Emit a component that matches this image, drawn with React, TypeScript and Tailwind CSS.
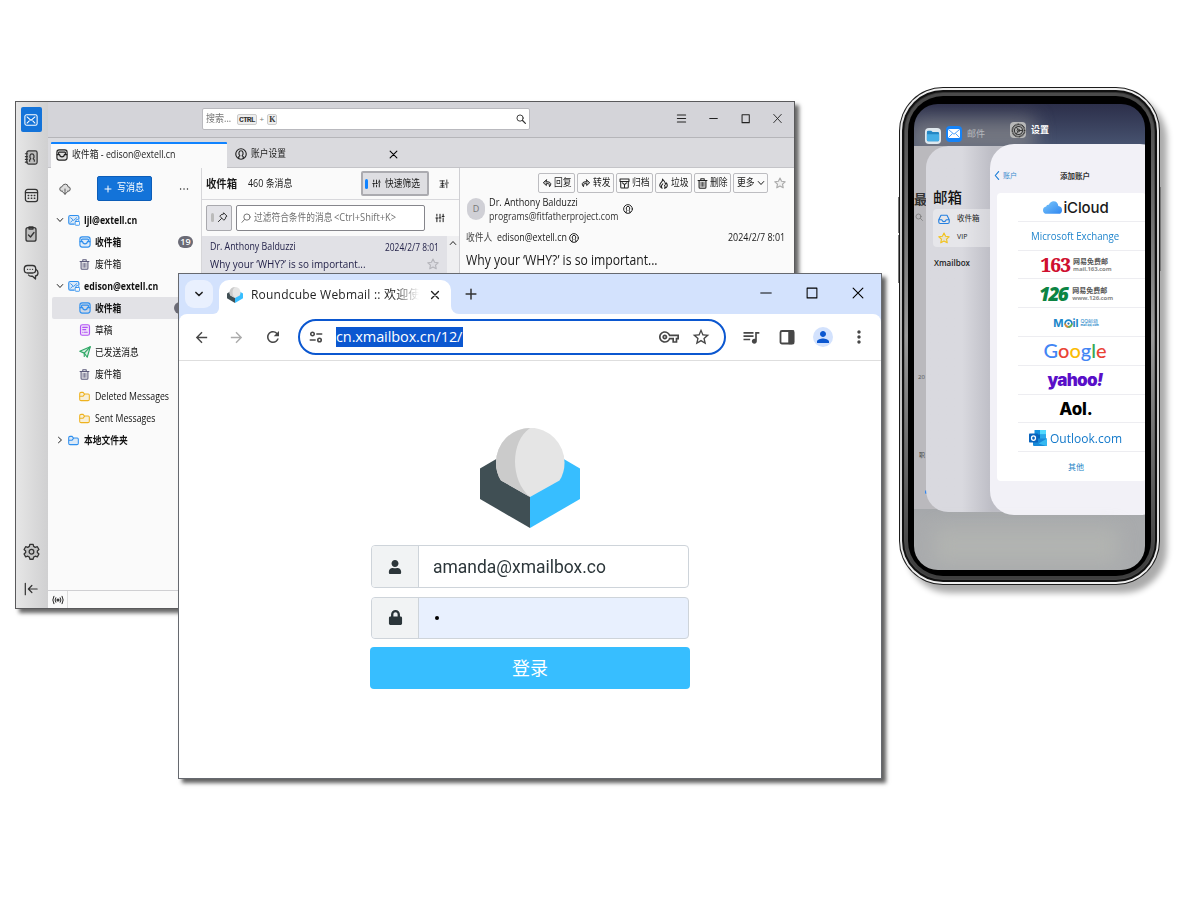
import type { ReactNode } from "react";
import {
  MdArrowBack,
  MdArrowForward,
  MdMoreVert,
  MdOutlineVpnKey,
  MdPerson,
  MdQueueMusic,
  MdRefresh,
  MdStarBorder,
} from "react-icons/md";
import { FaLock, FaUser } from "react-icons/fa";

const UI = "font-['Open_Sans','Noto_Sans_CJK_SC',sans-serif]";

/* Narrow label: the class gives the room it takes in the row and its horizontal scale. */
function Label({ className, children }: { className: string; children: ReactNode }) {
  return <span className={`block shrink-0 origin-left whitespace-nowrap ${className}`}>{children}</span>;
}

type IconProps = { className?: string; children: ReactNode; box?: number };

function Icon({ className = "", children, box = 16 }: IconProps) {
  return (
    <svg
      viewBox={`0 0 ${box} ${box}`}
      fill="none"
      stroke="currentColor"
      strokeWidth="1.5"
      strokeLinecap="round"
      strokeLinejoin="round"
      className={`shrink-0 ${className}`}
    >
      {children}
    </svg>
  );
}

const InboxIcon = ({ className = "" }: { className?: string }) => (
  <Icon className={className}>
    <rect x="1.2" y="1.2" width="13.6" height="13.6" rx="3" fill="currentColor" fillOpacity="0.12" />
    <path d="M4 4.200h8M1.500 7.500h3.300c.4 4 6 4 6.400 0h3.300M3.500 4.500v3M12.500 4.500v3" />
  </Icon>
);
const TrashIcon = ({ className = "" }: { className?: string }) => (
  <Icon className={className}>
    <path d="M1.500 3.700h13M5.500 3.500V1.200h5v2.300" />
    <path d="M3 4v9.500Q3 15 4.500 15h7q1.500 0 1.500-1.500V4" fill="currentColor" fillOpacity="0.15" />
    <path d="M6 6.500v5.500M8 6.500v5.500M10 6.500v5.500" strokeWidth="1" />
  </Icon>
);
const DraftIcon = ({ className = "" }: { className?: string }) => (
  <Icon className={className}>
    <rect x="2" y="1" width="12" height="14" rx="2.500" fill="currentColor" fillOpacity="0.15" />
    <path d="M5 4.500h6M5 7.500h4M7 11h4M5 11h.1" />
  </Icon>
);
const SentIcon = ({ className = "" }: { className?: string }) => (
  <Icon className={className}>
    <path d="M1 7 15 1l-4 14-4-5.500z" fill="currentColor" fillOpacity="0.15" />
    <path d="M15 1 7 9.500V14" />
  </Icon>
);
const FolderIcon = ({ className = "" }: { className?: string }) => (
  <Icon className={className}>
    <path d="M1 4Q1 2 3 2h3l2 2.500h5.500Q15 4.500 15 6v6q0 2-2 2H3q-2 0-2-2z" fill="currentColor" fillOpacity="0.15" />
    <path d="M1.500 7.500H6L8 5" />
  </Icon>
);
const AccountIcon = ({ className = "" }: { className?: string }) => (
  <Icon className={className}>
    <path d="M8 13.500H3q-2 0-2-2V4q0-2 2-2h9.500q2 0 2 2v2.500" fill="currentColor" fillOpacity="0.15" />
    <path d="m3.500 5 4 3.500 4-3.500M3.500 11 6 8.500" strokeWidth="1.200" />
    <rect x="9.500" y="10" width="6" height="5" rx="1" strokeWidth="1.200" />
    <path d="M10.700 10V8.500q0-1.200 1.800-1.200t1.800 1.200V10" strokeWidth="1.200" />
  </Icon>
);
const ContactIcon = ({ className = "" }: { className?: string }) => (
  <Icon className={className}>
    <circle cx="8" cy="8" r="7" />
    <path d="M5 14v-2.500l1.500-1C4.300 8 5 3.700 8 3.700s3.700 4.300 1.500 6.800l1.500 1V14" />
  </Icon>
);
const SlidersIcon = ({ className = "" }: { className?: string }) => (
  <Icon className={className}>
    <path d="M3 2v3M3 8v6M8 2v6M8 11v3M13 2v3M13 8v6M1.500 8h3M6.500 8h3M11.500 5.500h3" strokeWidth="1.600" />
  </Icon>
);
const StarIcon = ({ className = "" }: { className?: string }) => (
  <Icon className={className}>
    <path d="m8 1.300 2.100 4.400 4.800.6-3.500 3.300.9 4.800L8 12.100l-4.300 2.300.9-4.800L1.100 6.300l4.800-.6z" fill="currentColor" fillOpacity="0.12" />
  </Icon>
);
const DownIcon = ({ className = "" }: { className?: string }) => (
  <Icon className={className}>
    <path d="m2.500 5 5.500 6 5.500-6" strokeWidth="2" />
  </Icon>
);

/* ---------- Mail client window ---------- */

function SpacesBar() {
  return (
    <div className="flex w-[32px] shrink-0 flex-col items-center bg-linear-to-r from-[#e6e6e6] to-[#d0d0d1] pt-[5px] pr-[2px] text-[#333]">
      <div className="flex h-[25px] w-[21px] items-center justify-center rounded-[2px] bg-[#1373d9] text-white">
        <Icon className="size-[14px]">
          <g strokeWidth="1.200">
            <rect x="1" y="2" width="14" height="12" rx="2" />
            <path d="m3.500 4.500 4.500 4 4.500-4M3.500 11.500 6 9M12.500 11.500 10 9" />
          </g>
        </Icon>
      </div>
      <Icon className="mt-[18px] size-[15px]">
        <g strokeWidth="1.300">
          <rect x="3" y="1" width="11" height="14" rx="2" fill="#bdbdbd" />
          <path d="M1.500 4h2M1.500 7h2M1.500 10h2M1.500 13h2M6 12v-1.500l1.200-1C5.500 7 6.300 4.200 8.500 4.200s3 2.800 1.300 5.300l1.200 1V12" />
        </g>
      </Icon>
      <Icon className="mt-[23px] size-[15px]">
        <rect x="1.500" y="1.500" width="13" height="13" rx="2.500" strokeWidth="1.300" />
        <path d="M1.500 5h13" strokeWidth="1.300" />
        <path d="M4.500 8h.5M7.800 8h.5M11 8h.5M4.500 11h.5M7.800 11h.5M11 11h.5" />
      </Icon>
      <Icon className="mt-[23px] size-[16px]">
        <g strokeWidth="1.300">
          <rect x="3" y="1.700" width="10" height="13.500" rx="2" fill="#bdbdbd" />
          <path d="M6 1h4v2H6zM5.500 9l2 2L11 6.500" />
        </g>
      </Icon>
      <Icon className="mt-[22px] size-[16px]">
        <g strokeWidth="1.300">
          <path d="M4.500 1.500h5q3.200 0 3.200 3.200v1.100q0 3.200-3.200 3.200H4.500Q1.300 9 1.300 5.800V4.700q0-3.200 3.200-3.200zM4.500 5.300h.1M7 5.300h.1M9.500 5.300h.1" />
          <path d="M13 5.500q2 1 2 3.500 0 2.500-2.500 3v3l-3-2.800Q6.500 12.500 5.500 11" />
        </g>
      </Icon>
      <Icon className="mt-auto size-[17px]">
        <g strokeWidth="1.200">
          <path d="m6.500 1.200h3l.5 2 1.500.9 2-.6 1.500 2.600L13.500 7.500v1.500l1.500 1.400-1.500 2.600-2-.6-1.500.9-.5 2h-3l-.5-2-1.500-.9-2 .6L1 10.400 2.500 9V7.500L1 6.100l1.500-2.600 2 .6L6 3.200z" fill="#c6c6c6" />
          <circle cx="8" cy="8.200" r="2.200" />
        </g>
      </Icon>
      <Icon className="mt-[22px] mb-[12px] size-[14px]">
        <path d="M1.500 1.500v13M15 8H5M9 4 5 8l4 4" strokeWidth="1.400" />
      </Icon>
    </div>
  );
}

function TitleBar() {
  return (
    <div className="flex h-[36px] shrink-0 border-b border-[#b5b5b9] bg-[#d4d4d9]">
      <div className="mt-[6px] ml-[154px] flex h-[22px] w-[328px] items-center rounded-[2px] border border-[#b9b9be] bg-white pl-[3px] text-[#777]">
        <Label className="w-[25px] scale-x-[0.860] text-[10.500px]">搜索...</Label>
        <span className="ml-[6px] rounded-[2px] border border-[#ccc] bg-[#eee] px-[1px] font-['Liberation_Mono',monospace] text-[8px] leading-[9px] font-bold tracking-[-0.900px] text-[#333]">CTRL</span>
        <span className="mx-[3px] text-[8px]">+</span>
        <span className="rounded-[2px] border border-[#ccc] bg-[#eee] px-[1px] font-['Liberation_Serif',serif] text-[8px] leading-[9px] font-bold text-[#333]">K</span>
        <Icon className="mr-[3px] ml-auto size-[10px] text-[#333]">
          <circle cx="6.500" cy="6.500" r="5" />
          <path d="m10.500 10.500 4.500 4.500" strokeWidth="2" />
        </Icon>
      </div>
      <div className="mr-[11px] ml-auto flex h-[33px] items-center gap-[21px] text-[#222]">
        <Icon className="size-[11px]"><path d="M2 3h12M2 8h12M2 13h12" /></Icon>
        <Icon className="size-[11px]"><path d="M2.500 8h11" /></Icon>
        <Icon className="size-[11px]"><path d="M3 2.500h10.500v11.500H3z" /></Icon>
        <Icon className="size-[11px]"><path d="m2.500 2 11 12m0-12-11 12" strokeWidth="1.300" /></Icon>
      </div>
    </div>
  );
}

function TabBar() {
  return (
    <div className="flex h-[30px] shrink-0 items-end border-b border-[#c4c4c8] bg-[#dadade] text-[10.500px] text-[#222]">
      <div className="-mb-px ml-[3px] flex h-[26px] w-[176px] items-center rounded-t-[1px] border-t-2 border-[#1083ff] bg-[#fafafa] pb-[2px] pl-[5px]">
        <InboxIcon className="size-[12px]" />
        <Label className="ml-[4px] w-[104px] scale-x-[0.840]">收件箱 - edison@extell.cn</Label>
      </div>
      <div className="flex h-[26px] items-center pl-[8px]">
        <ContactIcon className="size-[12px]" />
        <Label className="ml-[4px] w-[35px] scale-x-[0.830]">账户设置</Label>
        <Icon className="ml-[103px] size-[9px] text-black"><path d="m2 2 12 12M14 2 2 14" strokeWidth="1.900" /></Icon>
      </div>
    </div>
  );
}

type Folder = {
  label: string;
  icon: ReactNode;
  top?: boolean;
  open?: boolean;
  bold?: boolean;
  selected?: boolean;
  badge?: string;
};

const folders: Folder[] = [
  { label: "ljl@extell.cn", bold: true, icon: <AccountIcon className="size-[12px] text-[#2f8fee]" />, top: true, open: true },
  { label: "收件箱", bold: true, icon: <InboxIcon className="size-[12px] text-[#2f8fee]" />, badge: "19" },
  { label: "废件箱", icon: <TrashIcon className="size-[11px] text-[#5c5b7b]" /> },
  { label: "edison@extell.cn", bold: true, icon: <AccountIcon className="size-[12px] text-[#2f8fee]" />, top: true, open: true },
  { label: "收件箱", bold: true, icon: <InboxIcon className="size-[12px] text-[#2f8fee]" />, selected: true, badge: "3" },
  { label: "草稿", icon: <DraftIcon className="size-[12px] text-[#b254f5]" /> },
  { label: "已发送消息", icon: <SentIcon className="size-[12px] text-[#2fa866]" /> },
  { label: "废件箱", icon: <TrashIcon className="size-[11px] text-[#5c5b7b]" /> },
  { label: "Deleted Messages", icon: <FolderIcon className="size-[11px] text-[#eeb21f]" /> },
  { label: "Sent Messages", icon: <FolderIcon className="size-[11px] text-[#eeb21f]" /> },
  { label: "本地文件夹", bold: true, icon: <FolderIcon className="size-[11px] text-[#2f8fee]" />, top: true },
];

function FolderRow({ f }: { f: Folder }) {
  const pad = f.top ? "pl-[4px]" : "pl-[27px]";
  return (
    <li className={`flex h-[22px] items-center rounded-[2px] ${pad} ${f.selected ? "bg-[#e2e2e6]" : ""}`}>
      {f.top && <DownIcon className={`mr-[4px] size-[8px] text-[#222] ${f.open ? "" : "-rotate-90"}`} />}
      <span className="flex w-[11px] justify-center">{f.icon}</span>
      <Label className={`ml-[5px] w-[75px] scale-x-[0.835] pt-px text-[10.500px] text-[#111] ${f.bold ? "font-bold" : ""}`}>{f.label}</Label>
      {f.badge && (
        <span className={`ml-auto flex h-[12px] items-center justify-center rounded-full bg-[#6b6b76] text-[9px] font-semibold text-white ${f.selected ? "mr-[9px] w-[18px]" : "mr-[8px] w-[15px]"}`}>
          {f.badge}
        </span>
      )}
    </li>
  );
}

function FolderPane() {
  return (
    <div className="flex w-[154px] shrink-0 flex-col border-r border-[#d6d6d9]">
      <div className="flex h-[41px] items-center pl-[11px]">
        <Icon className="size-[12px] text-[#555]">
          <path d="M5 11H4Q1 11 1 8t3-3Q5 1.500 8.500 1.500T12 5q3 0 3 3t-3 3h-1M8 8v7M5 12l3 3 3-3" fill="#ddd" strokeWidth="1.300" />
        </Icon>
        <div className="ml-[26px] flex h-[25px] w-[55px] items-center rounded-[2px] border border-[#0c5db8] bg-[#1373d9] pl-[6px] text-white">
          <Icon className="size-[8px]"><path d="M8 2v12M2 8h12" strokeWidth="2" /></Icon>
          <Label className="ml-[5px] w-[27px] scale-x-[0.860] pb-px text-[10.500px]">写消息</Label>
        </div>
        <Icon className="ml-[27px] size-[10px] text-[#222]"><path d="M2.500 8h.1M8 8h.1M13.500 8h.1" strokeWidth="2.200" /></Icon>
      </div>
      <ul className="ml-[4px]">
        {folders.map((f, i) => (
          <FolderRow key={i} f={f} />
        ))}
      </ul>
    </div>
  );
}

function MessageList() {
  return (
    <div className="flex w-[258px] shrink-0 flex-col border-r border-[#cfcfd3] text-[#1a1a1a]">
      <div className="flex h-[32px] items-center border-b border-[#d8d8dc] pl-[4px]">
        <Label className="w-[31px] scale-x-[0.900] text-[11.500px] font-bold">收件箱</Label>
        <Label className="ml-[11px] w-[44px] scale-x-[0.850] text-[10.500px]">460 条消息</Label>
        <div className="ml-auto flex h-[25px] w-[68px] items-center rounded-[2px] border-2 border-[#ababb0] bg-[#dedee2] pl-[2px]">
          <span className="h-[10px] w-[3px] rounded-full bg-[#1083ff]" />
          <SlidersIcon className="ml-[4px] size-[9px]" />
          <Label className="ml-[4px] w-[36px] scale-x-[0.830] text-[10.500px]">快速筛选</Label>
        </div>
        <Icon className="mr-[10px] ml-[10px] size-[10px]">
          <path d="M1.500 3h7M1.500 13h7M3 7h5M3 10h5M5.500 3v10M12.500 1.500v3M12.500 8v6M11 6.300h4M10 8h1" strokeWidth="1.300" />
        </Icon>
      </div>
      <div className="flex h-[36px] items-center pb-px pl-[4px]">
        <div className="flex h-[26px] w-[26px] items-center justify-center gap-[3px] rounded-[2px] border border-[#a9a9ae] bg-[#e3e3e8]">
          <span className="h-[9px] w-[3px] rounded-full bg-[#bbb]" />
          <Icon className="size-[11px]">
            <path d="M10 1.500 14.500 6l-1.500.8-1 3.200-2 2-6-6 2-2 3.200-1zM6.500 9.500 2 14" strokeWidth="1.300" />
          </Icon>
        </div>
        <div className="ml-[4px] flex h-[26px] w-[189px] items-center rounded-[2px] border border-[#85858b] bg-white pl-[4px] whitespace-nowrap text-[#707070]">
          <Icon className="size-[10px]">
            <circle cx="9.500" cy="6.500" r="5" />
            <path d="M5.500 10.500 1.500 15" />
          </Icon>
          <Label className="ml-[3px] w-[80px] scale-x-[0.830] text-[10.500px]">过滤符合条件的消息</Label>
          <Label className="w-[64px] scale-x-[0.890] text-[10.500px]">&lt;Ctrl+Shift+K&gt;</Label>
        </div>
        <SlidersIcon className="ml-[10px] size-[10px]" />
      </div>
      <div className="flex h-[44px]">
        <div className="flex grow flex-col bg-[#e1e1e6] pt-[3px] pr-[8px] pl-[8px] text-[#24234a]">
          <div className="flex h-[16px] items-center justify-between">
            <Label className="w-[85px] scale-x-[0.840] text-[10.500px]">Dr. Anthony Balduzzi</Label>
            <Label className="w-[54px] scale-x-[0.840] text-[10px]">2024/2/7 8:01</Label>
          </div>
          <div className="flex h-[17px] items-center justify-between">
            <Label className="w-[156px] scale-x-[0.860] text-[11.500px]">Why your ‘WHY?’ is so important...</Label>
            <StarIcon className="size-[12px] text-[#b5b5bb]" />
          </div>
        </div>
        <div className="w-[12px] bg-[#efeff1] pt-[3px] pl-[2px]">
          <DownIcon className="size-[8px] rotate-180 text-[#222]" />
        </div>
      </div>
    </div>
  );
}

const actions: { label: string; icon: ReactNode }[] = [
  { label: "回复", icon: <Icon className="size-[10px]"><path d="M7 3 2 7.500 7 12V9h3q2 0 2 5 2.500-3 2-5T10 6H7z" fill="#bbb" /></Icon> },
  { label: "转发", icon: <Icon className="size-[10px]"><path d="M9 3l5 4.500L9 12V9H6Q4 9 4 14 1.500 11 2 9t4-3h3z" fill="#bbb" /></Icon> },
  { label: "归档", icon: <Icon className="size-[11px]"><path d="M1.500 1.500h13V5h-13zM2.500 5v8q0 1.500 1.500 1.500h8q1.500 0 1.500-1.500V5M5 7l3 2.500L11 7M8 9.500V13" /></Icon> },
  { label: "垃圾", icon: <Icon className="size-[11px]"><path d="M6.500 1.500Q7 4 5 6T2.500 10.500q0 3 3.500 4.500-2.500-3.500 1-6.500M9.500 15q4-1 4-4.500 0-2-1.500-3.500 0 1.500-1 2-.5-4-4.500-7.500M9.500 15q1.500-2 0-4.500" /></Icon> },
  { label: "删除", icon: <TrashIcon className="size-[11px]" /> },
];

function Reader() {
  return (
    <div className="flex grow flex-col text-[#1a1a1a]">
      <div className="mt-[5px] flex h-[20px] items-center justify-end gap-[2px] pr-[8px] text-[10.500px]">
        {actions.map((a) => (
          <div key={a.label} className="flex h-[20px] w-[37px] items-center justify-end gap-[2px] rounded-[2px] border border-[#bdbdc1] pr-[2px] whitespace-nowrap text-[#222]">
            {a.icon}
            <Label className="w-[18px] scale-x-[0.840]">{a.label}</Label>
          </div>
        ))}
        <div className="flex h-[20px] w-[35px] items-center justify-center gap-[2px] rounded-[2px] border border-[#bdbdc1] whitespace-nowrap">
          <Label className="w-[18px] scale-x-[0.840]">更多</Label>
          <DownIcon className="size-[8px]" />
        </div>
        <StarIcon className="ml-[4px] size-[12px] text-[#aaa]" />
      </div>
      <div className="flex h-[35px] items-center pl-[7px]">
        <span className="mt-[-4px] flex h-[22px] w-[18px] items-center justify-center rounded-full bg-[#d0d0d6] text-[9px] text-[#777]">D</span>
        <div className="mt-[-3px] ml-[4px] flex w-[130px] flex-col">
          <Label className="h-[14px] scale-x-[0.870] text-[10.500px] leading-[14px]">Dr. Anthony Balduzzi</Label>
          <Label className="h-[15px] scale-x-[0.835] text-[10.500px] leading-[15px] text-[#333]">programs@fitfatherproject.com</Label>
        </div>
        <ContactIcon className="mt-[-4px] ml-[4px] size-[10px]" />
      </div>
      <div className="flex h-[20px] items-center pr-[9px] pl-[6px] text-[10.500px] whitespace-nowrap">
        <Label className="w-[26px] scale-x-[0.830] text-[#444]">收件人</Label>
        <Label className="ml-[5px] w-[70px] scale-x-[0.845]">edison@extell.cn</Label>
        <ContactIcon className="ml-[2px] size-[10px]" />
        <Label className="ml-auto w-[57px] scale-x-[0.850]">2024/2/7 8:01</Label>
      </div>
      <Label className="mt-[2px] ml-[6px] h-[20px] scale-x-[0.870] text-[14px] leading-[20px]">Why your ‘WHY?’ is so important...</Label>
    </div>
  );
}

function MailWindow() {
  return (
    <div className={`absolute top-[101px] left-[15px] flex h-[508px] w-[780px] border border-[#5a5a5c] bg-[#fafafa] shadow-[4px_4px_4px_#00000099] ${UI}`}>
      <SpacesBar />
      <div className="flex min-w-0 grow flex-col">
        <TitleBar />
        <TabBar />
        <div className="flex min-h-0 grow">
          <FolderPane />
          <MessageList />
          <Reader />
        </div>
        <div className="flex h-[18px] shrink-0 items-center border-t border-[#cfcfd2]">
          <div className="flex h-full w-[20px] items-center justify-center border-r border-[#ddd]">
            <Icon className="size-[12px] text-[#222]">
              <circle cx="8" cy="8" r="1.300" />
              <path d="M5 5q-2 3 0 6M11 5q2 3 0 6M2.500 3q-3 5 0 10M13.500 3q3 5 0 10" strokeWidth="1.300" />
            </Icon>
          </div>
        </div>
      </div>
    </div>
  );
}

/* ---------- Browser window ---------- */

function CubeLogo({ className = "" }: { className?: string }) {
  return (
    <svg viewBox="0 0 100 100" className={`shrink-0 ${className}`}>
      <path d="M0 40.500 18 30 50 48v52L0 71z" fill="#404f54" />
      <path d="M100 40.500 82 30 50 48v52l50-29z" fill="#37beff" />
      <path d="M50 69 21 52.500Q16 45 16 34.500A34 34.500 0 0 1 84.500 34.500Q84.500 45 79.500 52.500z" fill="#e5e5e5" />
      <path d="M50 69 21 52.500Q16 45 16 34.500A34 34.500 0 0 1 50 0C30 14 30 52 50 69z" fill="#cbcbcb" />
    </svg>
  );
}

function BrowserTabs() {
  return (
    <div className="flex h-[40px] shrink-0 items-end bg-[#d3e2fd]">
      <div className="mb-[6px] ml-[6px] flex size-[28px] items-center justify-center rounded-[9px] bg-[#e9f0fe] text-[#1f1f1f]">
        <Icon className="size-[10px]"><path d="m3 5.500 5 5 5-5" strokeWidth="2.500" /></Icon>
      </div>
      <div className="flex h-[34px] w-[6px] overflow-hidden bg-white">
        <span className="h-[34px] w-[6px] rounded-br-[8px] bg-[#d3e2fd]" />
      </div>
      <div className="flex h-[34px] w-[232px] items-center rounded-t-[10px] bg-white pb-[4px] pl-[8px]">
        <CubeLogo className="size-[16px]" />
        <span className="ml-[8px] w-[168px] bg-linear-to-r from-[#1f1f1f] from-85% to-transparent bg-clip-text text-[12px] tracking-[0.210px] whitespace-nowrap text-transparent">
          Roundcube Webmail :: 欢迎使
        </span>
        <Icon className="ml-[11px] size-[10px] text-[#222]"><path d="m2.500 2.500 11 11m0-11-11 11" strokeWidth="2.200" /></Icon>
      </div>
      <div className="flex h-[34px] w-[8px] overflow-hidden bg-white">
        <span className="h-[34px] w-[8px] rounded-bl-[8px] bg-[#d3e2fd]" />
      </div>
      <Icon className="mb-[14px] ml-[6px] size-[12px] text-[#333]"><path d="M8 1.500v13M1.500 8h13" strokeWidth="2" /></Icon>
      <div className="mr-[17px] mb-[15px] ml-auto flex items-center gap-[34px] text-black">
        <Icon className="size-[12px]"><path d="M1 8h14" strokeWidth="1.300" /></Icon>
        <Icon className="size-[12px]"><path d="M1.500 1.500h13v13h-13z" strokeWidth="1.400" /></Icon>
        <Icon className="size-[12px]"><path d="m1.500 1.500 13 13m0-13-13 13" /></Icon>
      </div>
    </div>
  );
}

function BrowserToolbar() {
  return (
    <div className="bg-[#d3e2fd]">
      <div className="flex h-[47px] shrink-0 items-center rounded-t-[8px] border-b border-[#dedede] bg-white pl-[14px] text-[#474747]">
        <MdArrowBack className="size-[17px]" />
        <MdArrowForward className="ml-[18px] size-[17px] text-[#ababab]" />
        <MdRefresh className="ml-[19px] size-[18px]" />
        <div className="ml-[16px] flex h-[36px] w-[428px] items-center rounded-full border-2 border-[#0b57d0] pl-[9px]">
          <Icon className="size-[14px]">
            <circle cx="4" cy="4.500" r="2" strokeWidth="1.800" />
            <circle cx="12" cy="11.500" r="2" strokeWidth="1.800" />
            <path d="M9 4.500h5.500M1.500 11.500H7" strokeWidth="1.800" />
          </Icon>
          <span className="ml-[13px] h-[20px] w-[127px] bg-[#0b57d0] text-[14.500px] leading-[20px] tracking-[-0.100px] whitespace-nowrap text-white">cn.xmailbox.cn/12/</span>
          <MdOutlineVpnKey className="ml-auto size-[20px]" />
          <MdStarBorder className="mr-[13px] ml-[12px] size-[20px]" />
        </div>
        <MdQueueMusic className="ml-[15px] size-[20px]" />
        <Icon className="ml-[18px] size-[16px]">
          <rect x="1.500" y="2" width="13" height="12.500" rx="1.500" strokeWidth="1.800" />
          <path d="M10 2h4.500v12.500H10z" fill="currentColor" />
        </Icon>
        <div className="ml-[18px] flex size-[20px] items-center justify-center rounded-full bg-[#d3e2fd] text-[#0b57d0]">
          <MdPerson className="size-[18px]" />
        </div>
        <MdMoreVert className="ml-[16px] size-[20px]" />
      </div>
    </div>
  );
}

function LoginField({ icon, children, filled }: { icon: ReactNode; children: ReactNode; filled?: boolean }) {
  return (
    <div className={`flex w-[318px] overflow-hidden rounded-[4px] border border-[#ced4da] ${filled ? "h-[42px] bg-[#e8f0fe]" : "h-[43px] bg-white"}`}>
      <div className="flex w-[47px] items-center justify-center border-r border-[#ced4da] bg-[#f1f3f4] text-[#2c363a]">{icon}</div>
      <div className="flex items-center pl-[14px]">{children}</div>
    </div>
  );
}

function BrowserWindow() {
  return (
    <div className={`absolute top-[273px] left-[178px] flex h-[506px] w-[704px] flex-col border border-[#66696f] bg-white shadow-[4px_4px_4px_#000000a0] ${UI}`}>
      <BrowserTabs />
      <BrowserToolbar />
      <div className="flex grow flex-col items-center pt-[67px]">
        <CubeLogo className="size-[100px]" />
        <div className="mt-[17px] flex flex-col items-center">
          <LoginField icon={<FaUser className="size-[14px]" />}>
            <Label className="scale-x-[0.930] pt-[2px] font-['Roboto',sans-serif] text-[18.800px] text-[#2c363a]">amanda@xmailbox.co</Label>
          </LoginField>
          <div className="mt-[9px]">
            <LoginField icon={<FaLock className="mb-[2px] size-[15px]" />} filled>
              <span className="mb-px ml-[2px] size-[4px] rounded-full bg-black" />
            </LoginField>
          </div>
          <div className="mt-[8px] flex h-[42px] w-[320px] items-center justify-center rounded-[4px] bg-[#37beff] pb-[2px] font-['Noto_Sans_CJK_SC',sans-serif] text-[18px] text-white">登录</div>
        </div>
      </div>
    </div>
  );
}

/* ---------- Phone ---------- */

function MailNetease({ num, host, tone }: { num: string; host: string; tone: string }) {
  return (
    <div className="flex items-center gap-[3px]">
      <span className={`text-[19px] leading-[20px] font-extrabold ${tone}`}>{num}</span>
      <div className="flex flex-col text-[#555]">
        <span className="text-[7px] leading-[8px] font-bold whitespace-nowrap">网易免费邮</span>
        <span className="text-[6px] leading-[7px] font-bold tracking-[-0.100px] whitespace-nowrap text-[#888]">{host}</span>
      </div>
    </div>
  );
}

const providers: ReactNode[] = [
  <div className="flex items-center gap-[1px]">
    <svg viewBox="0 0 36 24" className="h-[13px] w-[19px]">
      <defs>
        <linearGradient id="cloud" x1="0" y1="0" x2="1" y2="1">
          <stop offset="0" stopColor="#7cc8fb" />
          <stop offset="1" stopColor="#2f86f0" />
        </linearGradient>
      </defs>
      <path d="M8 24q-8 0-8-7 0-6 6-7 1-4 5-3Q14 0 20 0q8 0 9 9 7 1 7 8 0 7-7 7z" fill="url(#cloud)" />
    </svg>
    <span className="font-['Inter',sans-serif] text-[15px] font-medium tracking-[-0.150px] text-[#1a1a1a]">iCloud</span>
  </div>,
  <Label className="mr-[2px] w-[89px] scale-x-[0.880] text-[11px] text-[#1f84cc]">Microsoft Exchange</Label>,
  <MailNetease num="163" host="mail.163.com" tone="font-['Noto_Serif',serif] tracking-[-0.900px] text-[#cf1030]" />,
  <MailNetease num="126" host="www.126.com" tone="tracking-[-1.600px] text-[#0c8443] italic pr-[2px]" />,
  <div className="flex items-center gap-[1px] font-['Inter',sans-serif]">
    <span className="flex items-center text-[11px] font-bold text-[#1b87c9]">
      M
      <svg viewBox="0 0 16 16" className="size-[9px]">
        <circle cx="8" cy="8" r="6" fill="none" stroke="#1b87c9" strokeWidth="3" />
        <path d="M2 8a6 6 0 0 0 6 6" fill="none" stroke="#f08a24" strokeWidth="3" />
        <path d="M8 14a6 6 0 0 0 6-6" fill="none" stroke="#6ab83c" strokeWidth="3" />
        <circle cx="8" cy="8" r="2" fill="#1b6cb0" />
      </svg>
      il
    </span>
    <div className="flex flex-col pl-[1px] text-[#1b87c9]">
      <span className="text-[5px] leading-[5px] whitespace-nowrap">QQ邮箱</span>
      <span className="text-[3px] leading-[3px] font-bold whitespace-nowrap">mail.qq.com</span>
    </div>
  </div>,
  <span className="mr-[2px] mb-[4px] flex font-['Lato',sans-serif] text-[20px] font-medium">
    <span className="text-[#4285f4]">G</span>
    <span className="text-[#ea4335]">o</span>
    <span className="text-[#fbbc05]">o</span>
    <span className="text-[#4285f4]">g</span>
    <span className="text-[#34a853]">l</span>
    <span className="text-[#ea4335]">e</span>
  </span>,
  <span className="mr-[2px] font-['Inter',sans-serif] text-[17px] font-black tracking-[-0.750px] text-[#5a0fc8]">
    yahoo<span className="italic">!</span>
  </span>,
  <span className="font-['Inter',sans-serif] text-[17px] font-extrabold tracking-[-0.150px] text-black">Aol.</span>,
  <div className="mr-[2px] flex items-center gap-[3px]">
    <svg viewBox="0 0 36 32" className="h-[16px] w-[18px]">
      <path d="M11 0h23v18H11z" fill="#1490df" />
      <path d="M22 0h12v9H22z" fill="#50d9ff" />
      <path d="M22 9h12v9H22z" fill="#28a8ea" />
      <path d="M11 9h11v9H11z" fill="#0364b8" />
      <path d="M8 17h28v13q0 2-2 2H10q-2 0-2-2z" fill="#1789d8" />
      <path d="m36 17-17 10 15 5q2 0 2-2z" fill="#35b8f1" />
      <rect x="0" y="7" width="18" height="18" rx="1.500" fill="#0a64bd" />
      <ellipse cx="9" cy="16" rx="4" ry="4.500" fill="none" stroke="#fff" strokeWidth="2.500" />
    </svg>
    <Label className="w-[71px] scale-x-[0.890] text-[13.500px] text-[#1379ca]">Outlook.com</Label>
  </div>,
  <span className="mb-[2px] text-[8px] text-[#2583c6]">其他</span>,
];

function Phone() {
  return (
    <div className={`absolute top-[87px] left-[899px] h-[498px] w-[261px] rounded-[44px] bg-[#1c1c1c] p-[1px] shadow-[7px_8px_6px_#00000055] ${UI}`}>
      <span className="absolute top-[110px] -left-px h-[36px] w-px bg-[#777]" />
      <span className="absolute top-[148px] -left-px h-[48px] w-px bg-[#777]" />
      <span className="absolute top-[100px] -right-px h-[84px] w-px bg-[#777]" />
      <div className="h-full rounded-[43px] bg-linear-to-b from-[#f0f0f0] via-[#b9b9b9] to-[#f0f0f0] p-[2px]">
        <div className="h-full rounded-[41px] bg-[#101010] p-[2px]">
          <div className="h-full rounded-[39px] bg-linear-to-b from-[#333] via-[#777] to-[#444] p-[1px]">
            <div className="h-full rounded-[38px] bg-linear-to-b from-[#4a4a4a] from-2% via-[#9a9a9a] to-[#3f3f3f] to-98% p-[3px]">
              <div className="h-full rounded-[35px] bg-black px-[6px] pt-[8px] pb-[6px]">
                <PhoneScreen />
              </div>
            </div>
          </div>
        </div>
      </div>
    </div>
  );
}

function PhoneScreen() {
  return (
    <div className="relative h-full overflow-hidden rounded-[24px] bg-linear-to-b from-[#2c2f4a] from-0% via-[#4b5875] via-10% to-[#a9abad] to-90%">
      <div className="absolute top-[14px] -left-[4px] h-[36px] w-[125px] bg-[#8a8a8c] opacity-70 blur-[10px]" />
      <div className="absolute top-[42px] left-[-30px] h-[363px] w-[80px] rounded-[22px] bg-[#bab9bd]" />
      <div className="absolute top-[85px] left-0 flex w-[14px] flex-col overflow-hidden text-[#333]">
        <span className="text-[13px] leading-[20px] font-bold">最</span>
        <Icon className="mt-[4px] ml-px size-[8px] text-[#777]"><circle cx="7" cy="7" r="5" /><path d="m11 11 4 4" /></Icon>
        <span className="mt-[152px] ml-[4px] text-[6px] text-[#555]">20</span>
        <span className="mt-[69px] ml-[5px] text-[6px] text-[#444]">职</span>
        <span className="mt-[30px] ml-[11px] h-[4px] w-[3px] rounded-full bg-[#2f86f0]" />
      </div>
      <div className="absolute top-[42px] left-[12px] flex h-[366px] w-[120px] flex-col rounded-[22px] bg-linear-to-r from-[#d9d9df] from-30% to-[#bdbdc5] to-55% pt-[42px] pl-[7px] text-[#222]">
        <span className="text-[14.500px] leading-[20px] font-medium text-[#111]">邮箱</span>
        <div className="mt-px flex h-[38px] w-[110px] flex-col rounded-[4px] bg-white/35 pl-[5px] text-[7.500px]">
          <div className="flex h-[19px] items-center gap-[7px]">
            <Icon className="size-[12px] text-[#2680e0]"><path d="m4 3-3 6v3q0 2 2 2h10q2 0 2-2V9l-3-6zM1 9h4q1 2.500 3 2.500T11 9h4" /></Icon>
            <span>收件箱</span>
          </div>
          <div className="flex h-[19px] items-center gap-[7px]">
            <StarIcon className="size-[12px] text-[#f2c21c]" />
            <span className="text-[7px]">VIP</span>
          </div>
        </div>
        <span className="mt-[10px] ml-px text-[8px] leading-[12px] font-semibold">Xmailbox</span>
      </div>
      <div className="absolute top-[15px] left-[11px] flex items-center">
        <div className="mt-[9px] flex size-[16px] items-center justify-center rounded-[4px] bg-[#dfe8ee]">
          <svg viewBox="0 0 16 16" className="size-[14px]">
            <path d="M1 3.500Q1 2 2.500 2H6l1.500 1.500h6Q15 3.500 15 5v7.500q0 1.500-1.500 1.500h-11Q1 14 1 12.500z" fill="#2487c4" />
            <path d="M1 6h14v6.500q0 1.500-1.500 1.500h-11Q1 14 1 12.500z" fill="#45aee6" />
          </svg>
        </div>
        <div className="mt-[4px] ml-[5px] flex size-[16px] items-center justify-center rounded-[4px] bg-[#1683f7]">
          <svg viewBox="0 0 16 12" className="h-[9px] w-[12px]">
            <rect width="16" height="12" rx="2" fill="#fff" />
            <path d="m1 1 7 6 7-6M1 11l5-5M15 11l-5-5" fill="none" stroke="#1683f7" strokeWidth="1" />
          </svg>
        </div>
        <span className="mt-[4px] ml-[5px] text-[9px] text-white/50">邮件</span>
        <div className="-mt-[3px] ml-[25px] flex size-[16px] items-center justify-center rounded-[4px] bg-[#b8b8b8]">
          <svg viewBox="0 0 16 16" className="size-[15px]" fill="none" stroke="#333">
            <circle cx="8" cy="8" r="6.500" strokeWidth="1.800" strokeDasharray="1 .4" />
            <circle cx="8" cy="8" r="4.300" strokeWidth="1.200" />
            <circle cx="8" cy="8" r="1.500" />
            <path d="M8 8h5M8 8 5.500 4M8 8l-2.500 4" />
          </svg>
        </div>
        <span className="-mt-[3px] ml-[5px] text-[9px] font-bold text-white">设置</span>
      </div>
      <div className="absolute top-[40px] left-[76px] flex h-[371px] w-[174px] flex-col rounded-[24px] bg-[#f2f1f7] pl-[4px]">
        <div className="flex h-[49px] items-end pb-[10px] text-[7.500px] leading-[14px]">
          <Icon className="mr-px mb-[3px] -ml-px size-[9px] text-[#187cd8]"><path d="M10 1 4 8l6 7" strokeWidth="2" /></Icon>
          <span className="text-[7px] text-[#3a8fd0]">账户</span>
          <span className="ml-[43px] font-bold text-[#333]">添加账户</span>
        </div>
        <div className="ml-[3px] flex w-[149px] flex-col rounded-[4px] bg-white">
          {providers.map((p, i) => (
            <div key={i} className="flex h-[28.800px] items-center pl-[21px]">
              <div className={`flex h-full w-full items-center justify-center pt-[2px] pr-[12px] ${i < 9 ? "border-b border-[#ededf1]" : ""}`}>{p}</div>
            </div>
          ))}
        </div>
      </div>
      <div className="absolute bottom-[6px] left-[20px] h-[36px] w-[185px] bg-[#c0c2b8] opacity-40 blur-[10px]" />
    </div>
  );
}

export default function App() {
  return (
    <main className="relative h-[900px] w-[1200px] overflow-hidden bg-white">
      <MailWindow />
      <Phone />
      <BrowserWindow />
    </main>
  );
}
